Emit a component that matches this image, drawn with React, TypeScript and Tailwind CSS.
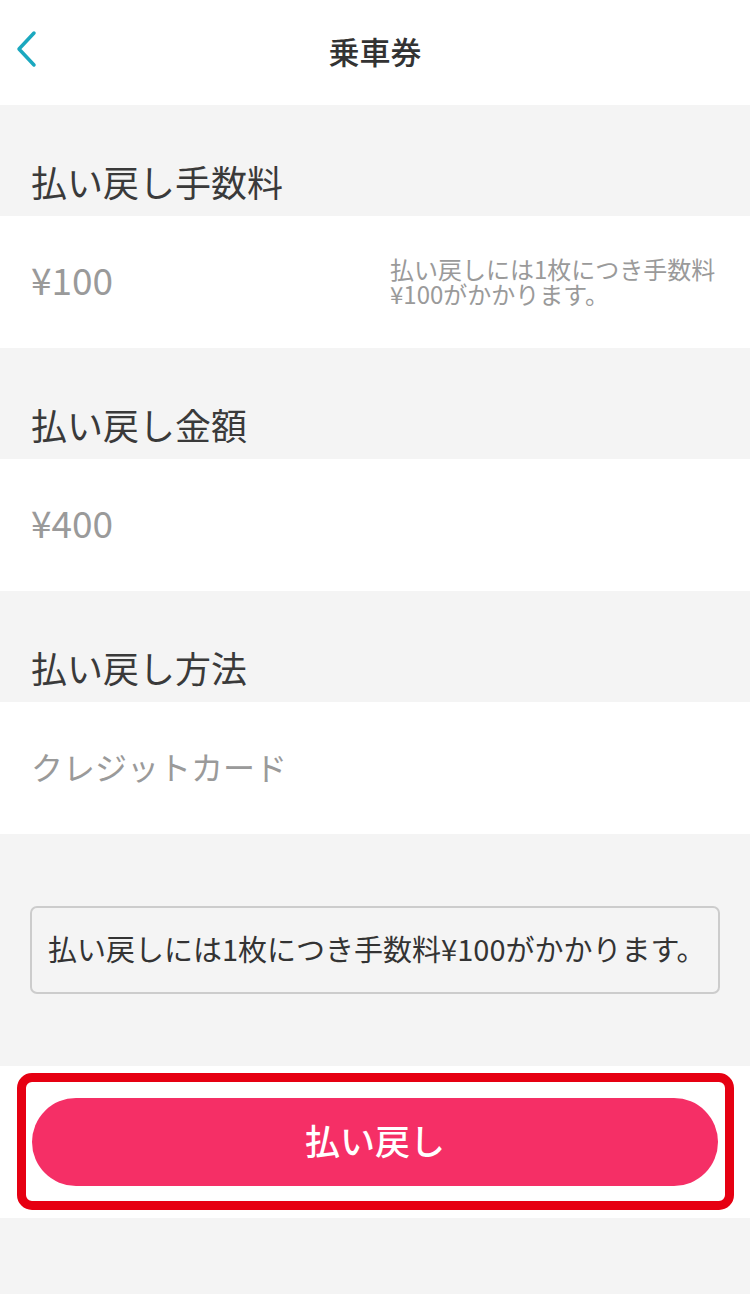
const font = {
  fontFamily: '"Noto Sans CJK JP", "Noto Sans", sans-serif',
};

function SectionLabel({ label }: { label: string }) {
  return (
    <div className="flex h-[111px] items-end bg-[#f4f4f4] px-[31px] pb-[13px]">
      <h2 className="text-[36px] leading-[44px] text-[#3a3a3a]">{label}</h2>
    </div>
  );
}

function ValueRow({ children }: { children: React.ReactNode }) {
  return (
    <div className="flex h-[132px] items-center justify-between bg-white pl-[31px] pr-[30px]">
      {children}
    </div>
  );
}

export default function App() {
  return (
    <div className="min-h-screen bg-[#f4f4f4]" style={font}>
      {/* Header */}
      <header className="relative flex h-[105px] items-center justify-center bg-white">
        <button className="absolute left-[12px] top-[28px] p-[2px]">
          <svg width="26" height="38" viewBox="0 0 26 38" fill="none">
            <path
              d="M20 3 L5 19 L20 35"
              stroke="#1ba8bf"
              strokeWidth="3.5"
              strokeLinecap="round"
              strokeLinejoin="round"
            />
          </svg>
        </button>
        <h1 className="pb-[2px] text-[31px] font-medium text-[#333333]">乗車券</h1>
      </header>

      {/* Fee */}
      <SectionLabel label="払い戻し手数料" />
      <ValueRow>
        <span className="pb-[6px] text-[37px] leading-[48px] text-[#9a9a9a]">¥100</span>
        <p className="w-[330px] pb-[2px] text-[24px] leading-[25px] text-[#9a9a9a]">
          払い戻しには1枚につき手数料
          <br />
          ¥100がかかります。
        </p>
      </ValueRow>

      {/* Amount */}
      <SectionLabel label="払い戻し金額" />
      <ValueRow>
        <span className="pb-[6px] text-[37px] leading-[48px] text-[#9a9a9a]">¥400</span>
      </ValueRow>

      {/* Method */}
      <SectionLabel label="払い戻し方法" />
      <ValueRow>
        <span className="pb-[4px] text-[32px] leading-[48px] text-[#9a9a9a]">
          クレジットカード
        </span>
      </ValueRow>

      {/* Notice */}
      <div className="bg-[#f4f4f4] px-[30px] py-[72px]">
        <div className="flex h-[88px] items-center rounded-[7px] border-2 border-[#cccccc] pl-[16px]">
          <p className="whitespace-nowrap pb-[2px] text-[29px] text-[#333333]">
            払い戻しには1枚につき手数料¥100がかかります。
          </p>
        </div>
      </div>

      {/* Refund button */}
      <div className="bg-white pb-[8px] pl-[17px] pr-[16px] pt-[7px]">
        <div className="rounded-[15px] border-[9px] border-[#e60012] pb-[15px] pl-[6px] pr-[7px] pt-[16px]">
          <button className="flex h-[88px] w-full items-center justify-center rounded-full bg-[#f52f66] pb-[4px] text-[35px] font-medium text-white">
            払い戻し
          </button>
        </div>
      </div>
    </div>
  );
}
